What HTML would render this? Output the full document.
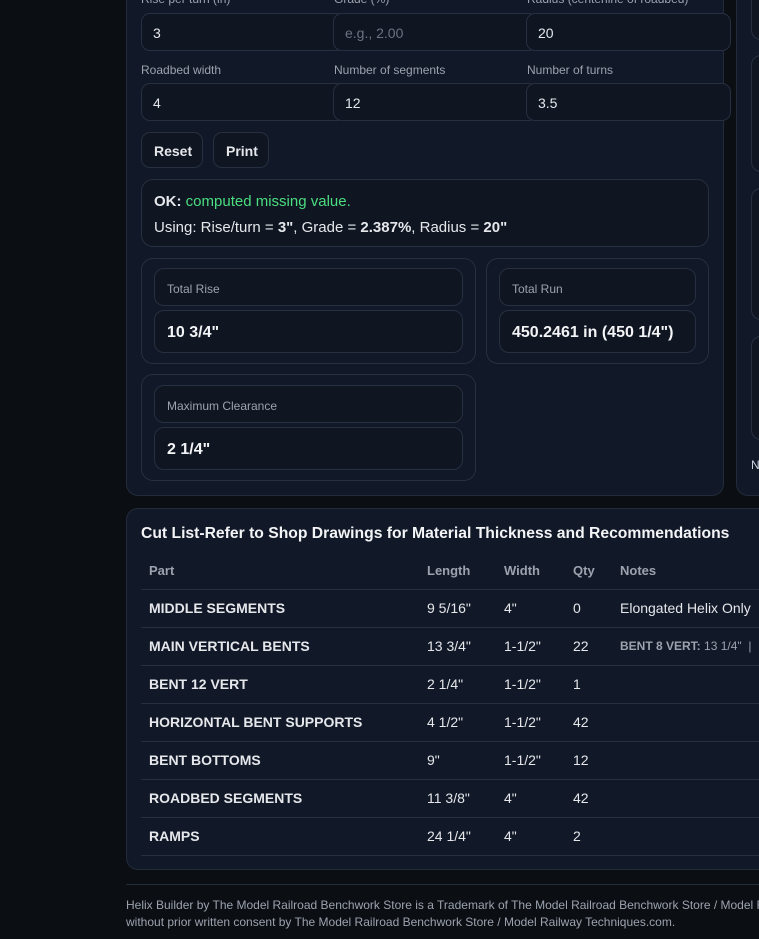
<!DOCTYPE html>
<html><head><style>
*{box-sizing:border-box;margin:0;padding:0}
html{overflow:hidden;width:759px;height:939px}
body{width:759px;height:939px;overflow:hidden;background:#0b0e13;font-family:"Liberation Sans",sans-serif;color:#e5e7eb;position:relative}
.abs{position:absolute}
.panel{background:#111827;border:1px solid #232c3b;border-radius:12px}
.inp{position:absolute;height:38px;width:205px;background:#0f1521;border:1px solid #263041;border-radius:9px;font-size:14px;padding:11px 0 0 11px;color:#e5e7eb}
.lbl{position:absolute;font-size:12px;color:#9ca3af;white-space:nowrap}
.btn{position:absolute;top:132px;height:36px;background:#0f1521;border:1px solid #263041;border-radius:9px;font-size:14px;font-weight:bold;padding:10px 0 0 12px}
.card{position:absolute;background:#111827;border:1px solid #263041;border-radius:12px}
.box{position:absolute;background:#0f1521;border:1px solid #263041;border-radius:10px}
.rl{font-size:12px;color:#9ca3af;padding:13px 0 0 12px}
.rv{font-size:16px;font-weight:bold;padding:13px 0 0 12px;color:#f3f4f6;white-space:nowrap}
.clip{position:absolute;left:0;top:0;width:759px;height:939px;overflow:hidden}
table{position:absolute;left:141px;top:552px;border-collapse:collapse;font-size:14px;width:618px}
td,th{text-align:left;height:38px;padding-left:8px;border-bottom:1px solid #263041;white-space:nowrap}
th{font-size:13px;color:#9ca3af;height:37px}
td:first-child{font-weight:bold}
</style></head><body><div class="clip">
<div class="abs panel" style="left:126px;top:-40px;width:598px;height:536px"></div>
<div class="abs panel" style="left:736px;top:-40px;width:60px;height:536px"></div>
<div class="box" style="left:751px;top:-10px;width:40px;height:50px"></div>
<div class="box" style="left:751px;top:55px;width:40px;height:117px"></div>
<div class="box" style="left:751px;top:188px;width:40px;height:132px"></div>
<div class="box" style="left:751px;top:336px;width:40px;height:104px"></div>
<div class="lbl" style="left:751px;top:458px;color:#cbd5e1">N</div>

<div class="lbl" style="left:141px;top:-8px">Rise per turn (in)</div>
<div class="lbl" style="left:334px;top:-8px">Grade (%)</div>
<div class="lbl" style="left:527px;top:-8px">Radius (centerline of roadbed)</div>
<div class="inp" style="left:141px;top:13px">3</div>
<div class="inp" style="left:333px;top:13px;color:#6b7280">e.g., 2.00</div>
<div class="inp" style="left:526px;top:13px">20</div>
<div class="lbl" style="left:141px;top:63px">Roadbed width</div>
<div class="lbl" style="left:334px;top:63px">Number of segments</div>
<div class="lbl" style="left:527px;top:63px">Number of turns</div>
<div class="inp" style="left:141px;top:83px">4</div>
<div class="inp" style="left:333px;top:83px">12</div>
<div class="inp" style="left:526px;top:83px">3.5</div>
<div class="btn" style="left:141px;width:62px">Reset</div>
<div class="btn" style="left:213px;width:56px">Print</div>
<div class="box" style="left:141px;top:179px;width:568px;height:68px;border-radius:12px;font-size:15px;padding:9px 0 0 12px;line-height:26px">
<b>OK:</b> <span style="color:#4ade80">computed missing value.</span><br>Using: Rise/turn = <b>3"</b>, Grade = <b>2.387%</b>, Radius = <b>20"</b></div>

<div class="card" style="left:141px;top:258px;width:335px;height:106px"></div>
<div class="box" style="left:154px;top:268px;width:309px;height:38px"><div class="rl">Total Rise</div></div>
<div class="box" style="left:154px;top:310px;width:309px;height:43px"><div class="rv">10 3/4"</div></div>
<div class="card" style="left:486px;top:258px;width:223px;height:106px"></div>
<div class="box" style="left:499px;top:268px;width:197px;height:38px"><div class="rl">Total Run</div></div>
<div class="box" style="left:499px;top:310px;width:197px;height:43px"><div class="rv">450.2461 in (450 1/4")</div></div>
<div class="card" style="left:141px;top:374px;width:335px;height:107px"></div>
<div class="box" style="left:154px;top:385px;width:309px;height:38px"><div class="rl">Maximum Clearance</div></div>
<div class="box" style="left:154px;top:427px;width:309px;height:43px"><div class="rv">2 1/4"</div></div>

<div class="abs panel" style="left:126px;top:508px;width:660px;height:362px"></div>
<div class="abs" style="left:141px;top:525px;font-size:15.7px;font-weight:bold;color:#f3f4f6;white-space:nowrap">Cut List-Refer to Shop Drawings for Material Thickness and Recommendations</div>
<table>
<tr><th style="width:278px">Part</th><th style="width:77px">Length</th><th style="width:69px">Width</th><th style="width:47px">Qty</th><th>Notes</th></tr>
<tr><td>MIDDLE SEGMENTS</td><td>9 5/16"</td><td>4"</td><td>0</td><td>Elongated Helix Only</td></tr>
<tr><td>MAIN VERTICAL BENTS</td><td>13 3/4"</td><td>1-1/2"</td><td>22</td><td style="font-size:12px;color:#9ca3af"><b>BENT 8 VERT:</b> 13 1/4" &nbsp;|</td></tr>
<tr><td>BENT 12 VERT</td><td>2 1/4"</td><td>1-1/2"</td><td>1</td><td></td></tr>
<tr><td>HORIZONTAL BENT SUPPORTS</td><td>4 1/2"</td><td>1-1/2"</td><td>42</td><td></td></tr>
<tr><td>BENT BOTTOMS</td><td>9"</td><td>1-1/2"</td><td>12</td><td></td></tr>
<tr><td>ROADBED SEGMENTS</td><td>11 3/8"</td><td>4"</td><td>42</td><td></td></tr>
<tr><td>RAMPS</td><td>24 1/4"</td><td>4"</td><td>2</td><td></td></tr>
</table>
<div class="abs" style="left:126px;top:884px;width:633px;height:1px;background:#232c3b"></div>
<div class="abs" style="left:126px;top:897px;font-size:12px;color:#9ca3af;line-height:17px;white-space:nowrap">Helix Builder by The Model Railroad Benchwork Store is a Trademark of The Model Railroad Benchwork Store / Model Railway<br>without prior written consent by The Model Railroad Benchwork Store / Model Railway Techniques.com.</div>
</div></body></html>
